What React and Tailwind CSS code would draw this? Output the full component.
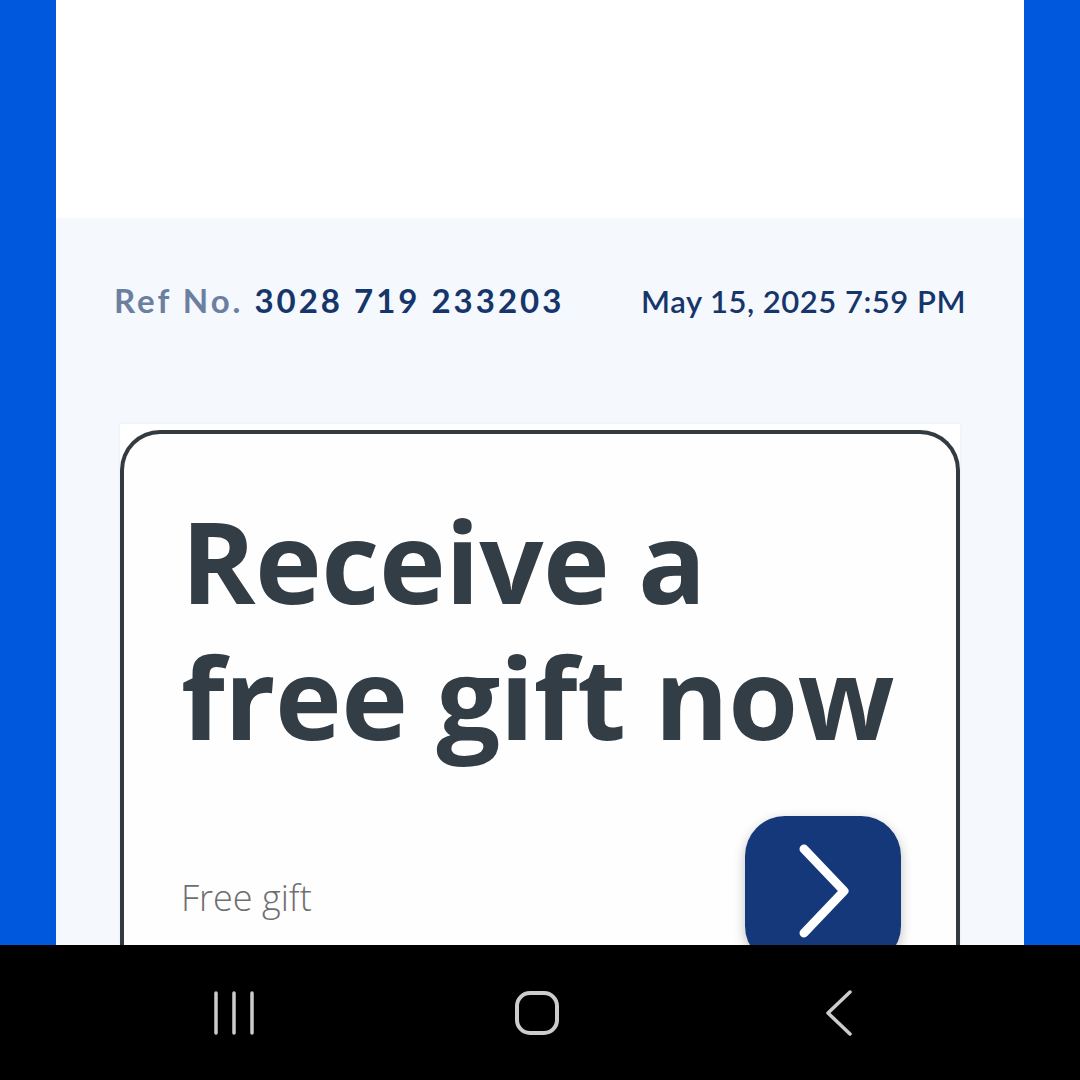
export default function App() {
  return (
    <div className="relative w-[1080px] h-[1080px] overflow-hidden bg-[#0059dc] flex justify-center">
      <div className="w-[968px] h-full flex flex-col bg-[#f5f8fd]">
        <div className="h-[218px] bg-white shrink-0" />
        <div
          className="flex items-baseline justify-between pl-[58px] pr-[58px] pt-[58px]"
          style={{ fontFamily: "Lato, 'Noto Sans', sans-serif" }}
        >
          <p className="text-[33px] font-bold text-[#6b7fa0] tracking-[3px] whitespace-nowrap">
            Ref No. <span className="text-[#16366b]">3028 719 233203</span>
          </p>
          <p className="text-[31px] font-semibold text-[#16366b] tracking-[0.5px] whitespace-nowrap">May 15, 2025 7:59 PM</p>
        </div>
        <div className="mx-[64px] mt-[98px] bg-white pt-[6px] shadow-[0_0_4px_rgba(0,0,0,0.05)]">
          <div
            className="border-[4px] border-[#333b40] rounded-t-[40px] border-b-0 pl-[57px] pr-[40px] pt-[58px] h-[600px] bg-[#fefefe]"
            style={{ fontFamily: "'Open Sans', sans-serif" }}
          >
            <h1 className="text-[113px] font-bold leading-[136px] text-[#333d45] tracking-[-0.5px] whitespace-nowrap">
              Receive a<br />free gift now
            </h1>
            <div className="flex items-start justify-between mt-[52px]">
              <p className="text-[36px] font-light text-[#6e6e6e] mt-[55px]">Free gift</p>
              <div className="w-[156px] h-[150px] rounded-[40px] bg-[#14387a] flex items-center justify-center shadow-[0_4px_12px_rgba(0,0,0,0.25)] mr-[15px]">
                <svg width="60" height="96" viewBox="0 0 60 96" fill="none" className="ml-[2px]">
                  <path d="M10 6 L50 48 L10 90" stroke="white" strokeWidth="9" strokeLinecap="round" strokeLinejoin="round" />
                </svg>
              </div>
            </div>
          </div>
        </div>
      </div>
      <div className="absolute left-0 bottom-0 w-full h-[135px] bg-black flex items-center pl-[213px]">
        <svg width="44" height="44" viewBox="0 0 44 44">
          <path d="M3 2 V42 M21 2 V42 M39 2 V42" stroke="#cccccc" strokeWidth="3.5" strokeLinecap="round" />
        </svg>
        <svg width="46" height="46" viewBox="0 0 46 46" className="ml-[257px]">
          <rect x="3" y="3" width="40" height="40" rx="13" stroke="#cccccc" strokeWidth="4" fill="none" />
        </svg>
        <svg width="30" height="48" viewBox="0 0 30 48" className="ml-[264px]">
          <path d="M26 3 L4 24 L26 45" stroke="#cccccc" strokeWidth="3.5" fill="none" strokeLinecap="round" strokeLinejoin="round" />
        </svg>
      </div>
    </div>
  );
}
